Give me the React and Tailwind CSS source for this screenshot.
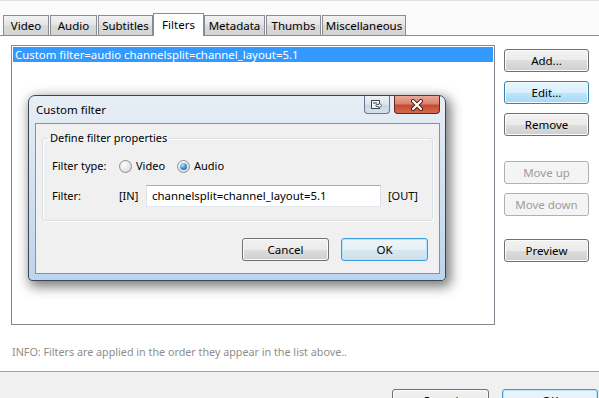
import React from "react";

const btn =
  "h-[23px] rounded-[3px] border border-[#707070] bg-[linear-gradient(to_bottom,#f2f2f2_0%,#ebebeb_50%,#dddddd_50%,#cfcfcf_100%)] shadow-[inset_0_0_0_1px_#fbfbfb] text-[11.5px] text-black flex items-center justify-center shrink-0";
const btnHot =
  "h-[23px] rounded-[3px] border border-[#3c7fb1] bg-[linear-gradient(to_bottom,#eaf6fd_0%,#d9f0fc_50%,#bee6fd_50%,#a7d9f5_100%)] shadow-[inset_0_0_0_1px_#f4fbff] text-[11.5px] text-black flex items-center justify-center shrink-0";
const btnDefault =
  "h-[23px] rounded-[3px] border border-[#3d9bd9] bg-[linear-gradient(to_bottom,#eef5f9_0%,#e6f0f6_50%,#d8e7f0_50%,#cfe1ec_100%)] shadow-[inset_0_0_0_1px_#b6e4fb] text-[11.5px] text-black flex items-center justify-center shrink-0";
const btnDisabled =
  "h-[23px] rounded-[3px] border border-[#adb2b5] bg-[#f4f4f4] text-[11.5px] text-[#9c9c9c] flex items-center justify-center shrink-0";

function Tab({ label, w, selected }) {
  if (selected) {
    return (
      <div
        className={`relative z-10 h-[23px] -mb-px bg-white border border-b-0 border-[#898c95] flex justify-center pt-[3px] text-[11.5px] text-black ${w}`}
      >
        {label}
      </div>
    );
  }
  return (
    <div
      className={`h-[20px] border border-b-0 border-[#898c95] bg-[linear-gradient(to_bottom,#f2f2f2,#e3e3e3_50%,#dadada_50%,#d3d3d3)] flex justify-center pt-[2px] text-[11.5px] text-black ${w}`}
    >
      {label}
    </div>
  );
}

function Radio({ checked }) {
  return (
    <span className="w-[13px] h-[13px] rounded-full border border-[#8c8e90] bg-[radial-gradient(circle_at_35%_30%,#ffffff,#e4e4e4_60%,#cfcfcf)] flex items-center justify-center shrink-0">
      {checked && (
        <span className="w-[7px] h-[7px] rounded-full bg-[radial-gradient(circle_at_35%_30%,#b9e4ff,#3b8ccc_55%,#1a4f80)]" />
      )}
    </span>
  );
}

export default function App() {
  return (
    <div className="relative w-[599px] h-[398px] overflow-hidden bg-white flex flex-col font-['Noto_Sans',sans-serif] text-[11px] leading-[16px]">
      {/* Tab strip */}
      <div className="h-[36px] shrink-0 border-t border-t-[#dedede] border-b border-b-[#898c95] bg-[#fbfbfb] flex items-end pl-[3px]">
        <Tab label="Video" w="w-[46px]" />
        <Tab label="Audio" w="w-[47px] ml-px" />
        <Tab label="Subtitles" w="w-[55px] ml-px" />
        <Tab label="Filters" w="w-[51px]" selected />
        <Tab label="Metadata" w="w-[61px]" />
        <Tab label="Thumbs" w="w-[55px] ml-px" />
        <Tab label="Miscellaneous" w="w-[84px] ml-px" />
      </div>

      {/* Panel */}
      <div className="flex pt-[9px] pl-[11px] shrink-0">
        <div className="w-[484px] h-[280px] border border-[#828790] bg-white p-px">
          <div className="h-[15px] bg-[#3399ff] text-white pl-[2px] text-[11.4px] leading-[15px] whitespace-nowrap">
            Custom filter=audio channelsplit=channel_layout=5.1
          </div>
        </div>
        <div className="ml-[9px] mt-[4px] w-[85px] flex flex-col">
          <div className={btn}>Add...</div>
          <div className={`${btnHot} mt-[9px]`}>Edit...</div>
          <div className={`${btn} mt-[9px]`}>Remove</div>
          <div className={`${btnDisabled} mt-[25px]`}>Move up</div>
          <div className={`${btnDisabled} mt-[9px]`}>Move down</div>
          <div className={`${btn} mt-[23px]`}>Preview</div>
        </div>
      </div>

      <div className="mt-[19px] pl-[12px] text-[10.75px] text-[#8d8d8d] whitespace-nowrap">
        INFO: Filters are applied in the order they appear in the list above..
      </div>

      {/* Bottom bar */}
      <div className="mt-auto h-[27px] shrink-0 overflow-hidden border-t border-[#a0a0a0] bg-[#f0f0f0] flex justify-end gap-[13px] pt-[17px] pr-px">
        <div className={`${btn} w-[97px]`}>Cancel</div>
        <div className={`${btnDefault} w-[96px]`}>OK</div>
      </div>

      {/* Custom filter dialog */}
      <div className="absolute left-[28px] top-[95px] w-[418px] h-[186px] rounded-t-[7px] rounded-b-[4px] border border-[#3b4652] bg-[linear-gradient(to_bottom,#e8eef5,#d6e3f1_40%,#bcd5ee)] shadow-[3px_4px_12px_2px_rgba(0,0,0,0.5)] pl-[6px] pr-[5px] pb-[6px] flex flex-col">
        <div className="h-[27px] flex shrink-0">
          <div className="self-center pl-px text-[11.5px] text-black">Custom filter</div>
          <div className="ml-auto flex gap-[4px] self-start">
            <div className="w-[26px] h-[18px] rounded-b-[4px] border border-t-0 border-[#6c7887] bg-[linear-gradient(to_bottom,#eef2f7,#dbe4ee_50%,#c9d6e4_50%,#d4e0ec)] flex items-center justify-center">
              <svg width="12" height="10" viewBox="0 0 12 10">
                <rect x="0.5" y="0.5" width="8" height="8" fill="#f4f4f4" stroke="#3c4450" />
                <rect x="2" y="2.5" width="4" height="1" fill="#3c4450" />
                <path d="M5 4.5 H8 V3 L11 5.5 L8 8 V6.5 H5 Z" fill="#ffffff" stroke="#3c4450" strokeWidth="0.8" />
              </svg>
            </div>
            <div className="w-[46px] h-[18px] rounded-b-[4px] border border-t-0 border-[#5b2a22] bg-[linear-gradient(to_bottom,#e9a99c,#d9836f_45%,#c74a30_55%,#d26a4c)] flex items-center justify-center">
              <svg width="14" height="12" viewBox="0 0 14 12">
                <path d="M3 2 L11 10 M11 2 L3 10" stroke="#4a1e18" strokeWidth="4" strokeLinecap="round" />
                <path d="M3 2 L11 10 M11 2 L3 10" stroke="#ffffff" strokeWidth="2.2" strokeLinecap="round" />
              </svg>
            </div>
          </div>
        </div>
        <div className="flex-1 border border-[#8593a1] bg-[#f0f0f0] flex flex-col pt-[6px]">
          <fieldset className="ml-[6px] w-[391px] h-[91px] border border-[#d5dfe5] rounded-[3px] shadow-[inset_1px_1px_0_#ffffff,1px_1px_0_#ffffff]">
            <legend className="ml-[5px] px-[2px] text-black leading-[16px]">Define filter properties</legend>
            <div className="flex items-center mt-[12px] pl-[9px] h-[16px]">
              <span className="w-[67px]">Filter type:</span>
              <span className="w-[58px] flex items-center gap-[4px]">
                <Radio />
                <span>Video</span>
              </span>
              <span className="flex items-center gap-[4px]">
                <Radio checked />
                <span>Audio</span>
              </span>
            </div>
            <div className="flex items-center mt-[11px] pl-[9px] h-[22px]">
              <span className="w-[67px]">Filter:</span>
              <span className="w-[27px]">[IN]</span>
              <div className="w-[235px] h-[22px] border border-[#abadb3] border-l-[#e2e3ea] border-r-[#dbdfe6] border-b-[#e3e9ef] bg-white pl-[5px] flex items-center whitespace-nowrap text-[11.4px]">
                channelsplit=channel_layout=5.1
              </div>
              <span className="ml-[7px]">[OUT]</span>
            </div>
          </fieldset>
          <div className="flex justify-end gap-[12px] mt-[17px] mr-[11px]">
            <div className={`${btn} w-[87px]`}>Cancel</div>
            <div className={`${btnDefault} w-[87px]`}>OK</div>
          </div>
        </div>
      </div>
    </div>
  );
}
